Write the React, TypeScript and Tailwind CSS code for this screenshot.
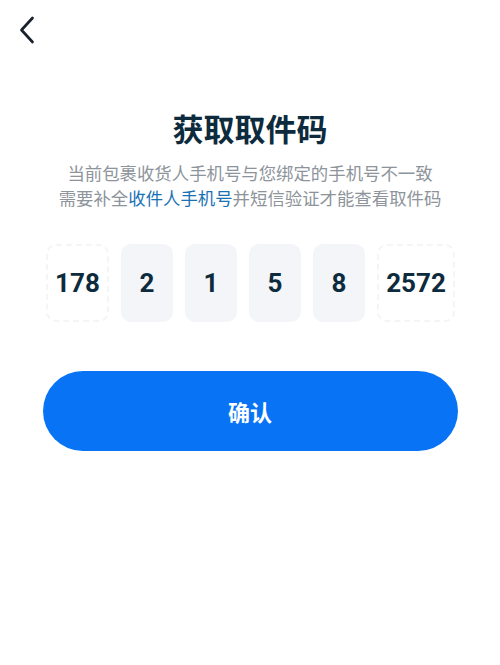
const digits = [
  { v: "178", w: "w-[63px]", dashed: true },
  { v: "2", w: "w-[52px]", dashed: false },
  { v: "1", w: "w-[52px]", dashed: false },
  { v: "5", w: "w-[52px]", dashed: false },
  { v: "8", w: "w-[52px]", dashed: false },
  { v: "2572", w: "w-[78px]", dashed: true },
];

function BackIcon() {
  return (
    <svg width="16" height="28" viewBox="0 0 16 28" fill="none" aria-hidden>
      <path d="M13.5 2 L2.5 14 L13.5 26" stroke="#18222d" strokeWidth="2.7" strokeLinecap="round" strokeLinejoin="round" />
    </svg>
  );
}

export default function App() {
  return (
    <div className="relative h-[665px] w-[500px] overflow-hidden bg-white font-['Noto_Sans_CJK_SC',sans-serif]">
      <div className="pl-[19px] pt-[16px]">
        <BackIcon />
      </div>

      <h1 className="mt-[64px] text-center text-[31px] font-bold leading-[40px] text-[#0d2b3d]">
        获取取件码
      </h1>
      <p className="mt-[12px] text-center text-[17.4px] leading-[25px] text-[#8d949b]">
        当前包裹收货人手机号与您绑定的手机号不一致
        <br />
        需要补全<span className="text-[#1a72b4]">收件人手机号</span>并短信验证才能查看取件码
      </p>

      <div className="mt-[34px] flex justify-center gap-[12px] pl-[1px]">
        {digits.map((d, i) => (
          <div
            key={i}
            className={`flex h-[78px] items-center justify-center rounded-[10px] font-['Roboto',sans-serif] text-[26px] font-bold text-[#0d2b3d] ${d.w} ${
              d.dashed ? "border-2 border-dashed border-[#f3f5f7] bg-white" : "bg-[#f3f5f8]"
            }`}
          >
            {d.v}
          </div>
        ))}
      </div>

      <div className="mt-[49px] flex justify-center">
        <button className="flex h-[80px] w-[415px] items-center justify-center rounded-full bg-[#0874f5] text-[22px] font-bold text-white">
          确认
        </button>
      </div>
    </div>
  );
}
